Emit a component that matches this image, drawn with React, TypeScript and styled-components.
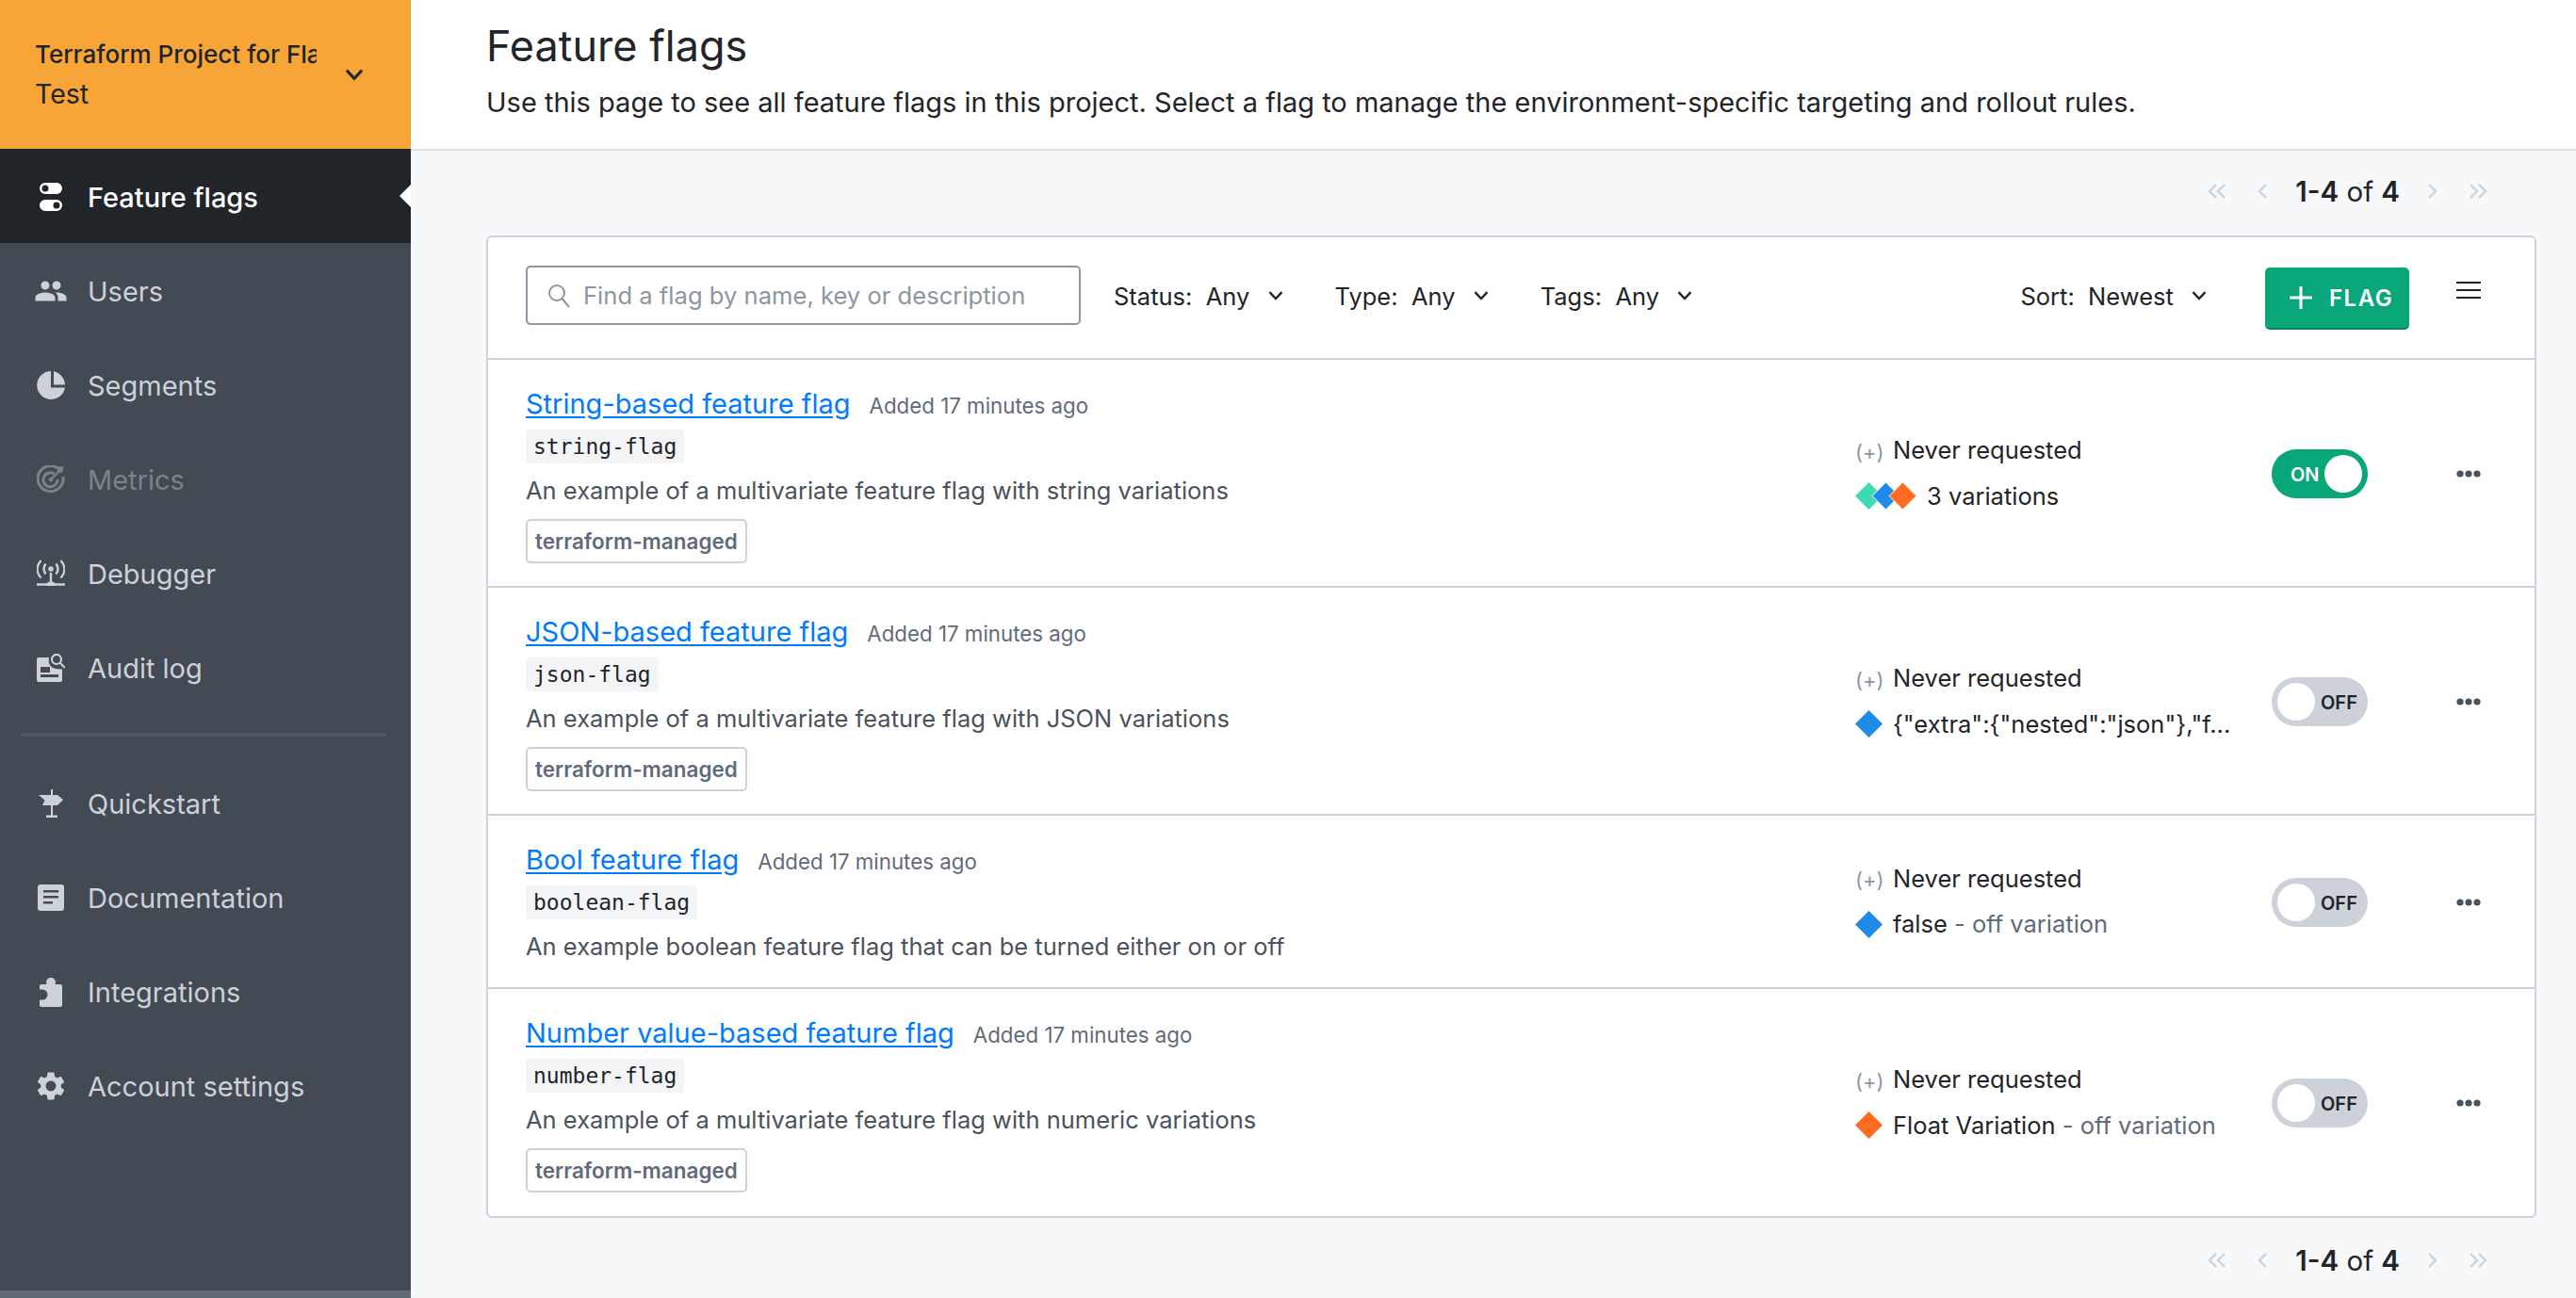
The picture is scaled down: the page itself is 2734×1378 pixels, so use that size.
import React from "react";
import styled, { createGlobalStyle } from "styled-components";
import { MdPeople, MdSettings } from "react-icons/md";

const GlobalStyle = createGlobalStyle`
  html, body {
    margin: 0;
    padding: 0;
    background: #f7f8fa;
    font-family: Inter, "Noto Sans", sans-serif;
    color: #212429;
  }
  * { box-sizing: border-box; }
`;

const Page = styled.div`
  display: flex;
  width: 2734px;
  height: 1378px;
  overflow: hidden;
`;

const Sidebar = styled.aside`
  width: 436px;
  flex: none;
  display: flex;
  flex-direction: column;
  background: #434a54;
  border-bottom: 8px solid #5f6a76;
`;

const ProjectHeader = styled.div`
  height: 158px;
  flex: none;
  background: #f8a537;
  display: flex;
  align-items: center;
  padding: 0 50px 0 37px;
  justify-content: space-between;
  color: #212429;
`;

const ProjectText = styled.div`
  width: 299px;
  overflow: hidden;
  white-space: nowrap;
  padding-top: 1px;
`;

const ProjectName = styled.div`
  font-size: 26px;
  font-weight: 500;
  line-height: 40px;
`;

const EnvName = styled.div`
  font-size: 28.5px;
  line-height: 44px;
`;

const NavList = styled.nav`
  display: flex;
  flex-direction: column;
`;

const NavItem = styled.div<{ $active?: boolean; $muted?: boolean }>`
  position: relative;
  height: 100px;
  display: flex;
  align-items: center;
  gap: 19px;
  padding: 2px 0 0 34px;
  font-size: 29px;
  font-weight: ${(p) => (p.$active ? 500 : 400)};
  background: ${(p) => (p.$active ? "#212429" : "transparent")};
  color: ${(p) => (p.$active ? "#ffffff" : p.$muted ? "#7c8288" : "#cdd1da")};
  ${(p) =>
    p.$active &&
    `&::after {
      content: "";
      position: absolute;
      right: 0;
      top: 38px;
      border-top: 12px solid transparent;
      border-bottom: 12px solid transparent;
      border-right: 12px solid #ffffff;
    }`}
`;

const NavIcon = styled.span`
  width: 40px;
  height: 40px;
  flex: none;
  display: flex;
  align-items: center;
  justify-content: center;
`;

const NavDivider = styled.div`
  height: 4px;
  margin: 20px 26px 20px 22px;
  background: #4f5661;
`;

const Main = styled.main`
  flex: 1;
  display: flex;
  flex-direction: column;
  min-width: 0;
`;

const TopBar = styled.header`
  height: 160px;
  flex: none;
  background: #ffffff;
  border-bottom: 2px solid #dcdfe4;
  padding: 20px 0 0 80px;
`;

const Title = styled.h1`
  margin: 0;
  font-size: 45px;
  font-weight: 400;
  line-height: 58px;
`;

const Subtitle = styled.p`
  margin: 10px 0 0;
  font-size: 29px;
  line-height: 42px;
`;

const Pager = styled.div<{ $bottom?: boolean }>`
  flex: none;
  height: ${(p) => (p.$bottom ? "85px" : "90px")};
  display: flex;
  align-items: center;
  justify-content: flex-end;
  gap: 30px;
  padding-right: 94px;
  padding-top: ${(p) => (p.$bottom ? "5px" : "0")};
  padding-bottom: ${(p) => (p.$bottom ? "0" : "4px")};
  color: #cdd1d9;
`;

const PagerText = styled.span`
  font-size: 29.5px;
  color: #212429;
  font-weight: 400;
  b {
    font-weight: 600;
  }
`;

const Card = styled.section`
  margin: 0 42px 0 80px;
  background: #ffffff;
  border: 2px solid #cdd1d9;
  border-radius: 6px;
`;

const Toolbar = styled.div`
  height: 128px;
  display: flex;
  align-items: center;
  padding: 2px 57px 0 40px;
  font-size: 25.5px;
`;

const SearchBox = styled.div`
  width: 589px;
  height: 63px;
  flex: none;
  display: flex;
  align-items: center;
  gap: 14px;
  padding-left: 21px;
  border: 2px solid #8c96a3;
  border-radius: 5px;
  color: #8c96a3;
  font-size: 25.6px;
  margin: 0 35px 7px 0;
`;

const Filter = styled.div<{ $push?: boolean }>`
  display: flex;
  align-items: center;
  gap: 12px;
  margin: 0 55px 6px 0;
  white-space: pre;
  ${(p) => p.$push && "margin-left: auto; margin-right: 62px;"}
`;

const AddButton = styled.button`
  width: 153px;
  height: 66px;
  flex: none;
  display: flex;
  align-items: center;
  gap: 17px;
  padding: 0 0 0 25px;
  background: #09a67a;
  color: #ffffff;
  border: none;
  border-bottom: 2px solid #087f5e;
  border-radius: 5px;
  font-family: inherit;
  font-size: 24px;
  font-weight: 600;
  letter-spacing: 1.5px;
  margin-right: 50px;
`;

const Row = styled.article`
  display: flex;
  align-items: center;
  padding: 26px 57px 24px 40px;
  border-top: 2px solid #cdd1d9;
  &:nth-of-type(n + 3) {
    padding-bottom: 25px;
  }
`;

const RowMain = styled.div`
  flex: 1;
  min-width: 0;
  padding-top: 3px;
`;

const NameLine = styled.div`
  display: flex;
  align-items: baseline;
  gap: 20px;
  height: 38px;
`;

const FlagName = styled.a`
  font-size: 29px;
  color: #007aff;
  text-decoration: underline;
  text-underline-offset: 3px;
`;

const Added = styled.span`
  font-size: 22.3px;
  color: #5f6b7a;
`;

const KeyChip = styled.code`
  display: block;
  width: fit-content;
  height: 36px;
  margin-top: 7px;
  padding: 0 8px;
  background: #f3f4f6;
  border-radius: 4px;
  font-family: "DejaVu Sans Mono", monospace;
  font-size: 23px;
  line-height: 36px;
`;

const Description = styled.div`
  margin-top: 11px;
  font-size: 25.5px;
  line-height: 36px;
  color: #4a525d;
`;

const Tag = styled.div`
  width: fit-content;
  height: 47px;
  margin-top: 12px;
  padding: 0 8px;
  border: 2px solid #cdd1d9;
  border-radius: 5px;
  font-size: 22.5px;
  font-weight: 600;
  line-height: 44px;
  color: #5f6b7a;
`;

const StatusCol = styled.div`
  width: 442px;
  flex: none;
  display: flex;
  flex-direction: column;
  gap: 11px;
  margin-bottom: 3px;
  font-size: 25.5px;
  line-height: 36px;
`;

const StatusLine = styled.div`
  display: flex;
  align-items: center;
  gap: 11px;
  white-space: nowrap;
`;

const PlusMark = styled.span`
  width: 29px;
  flex: none;
  font-size: 22px;
  color: #8c96a3;
  white-space: pre;
  padding-top: 3px;
`;

const OffNote = styled.span`
  color: #5f6b7a;
`;

const Toggle = styled.div<{ $on?: boolean }>`
  position: relative;
  width: 102px;
  height: 52px;
  flex: none;
  border-radius: 26px;
  background: ${(p) => (p.$on ? "#09a67a" : "#cdd1d9")};
  color: ${(p) => (p.$on ? "#ffffff" : "#212429")};
  font-size: 20px;
  font-weight: 600;
  line-height: 52px;
  padding: ${(p) => (p.$on ? "1px 0 0 20px" : "1px 0 0 52px")};
  &::after {
    content: "";
    position: absolute;
    top: 6px;
    width: 40px;
    height: 40px;
    border-radius: 50%;
    background: #ffffff;
    ${(p) => (p.$on ? "right: 6px;" : "left: 6px;")}
  }
`;

const MoreSlot = styled.div`
  width: 26px;
  margin-left: 94px;
  flex: none;
  display: flex;
  color: #4a525d;
`;

const MenuGlyph = styled.svg`
  flex: none;
  margin-bottom: 18px;
`;

const DoubleArrow = styled.svg<{ $side: "left" | "right" }>`
  flex: none;
  margin-${(p) => (p.$side === "left" ? "right" : "left")}: 3px;
`;

const MenuIcon = () => (
  <MenuGlyph width="26" height="20" viewBox="0 0 26 20">
    <path d="M0 2h26M0 10h26M0 18h26" stroke="#212429" strokeWidth="2" />
  </MenuGlyph>
);

const Chevron = ({ size = 16 }: { size?: number }) => (
  <svg width={size} height={size * 0.7} viewBox="0 0 16 11" fill="none">
    <path d="M1.5 2 8 9l6.5-7" stroke="currentColor" strokeWidth="2.4" />
  </svg>
);

const SearchIcon = () => (
  <svg width="24" height="26" viewBox="0 0 24 26" fill="none" stroke="currentColor" strokeWidth="2">
    <circle cx="10" cy="10" r="8" />
    <path d="M15.5 16 23 25" />
  </svg>
);

const PlusIcon = () => (
  <svg width="26" height="26" viewBox="0 0 26 26" style={{ flex: "none" }}>
    <path d="M13 1v24M1 13h24" stroke="#fff" strokeWidth="3" />
  </svg>
);

const Dots = () => (
  <svg width="26" height="8" viewBox="0 0 26 8" fill="currentColor">
    <circle cx="4" cy="4" r="3.6" />
    <circle cx="13" cy="4" r="3.6" />
    <circle cx="22" cy="4" r="3.6" />
  </svg>
);

const FlagsIcon = () => (
  <svg width="24" height="30" viewBox="0 0 24 30" fill="currentColor" fillRule="evenodd">
    <path d="M6 0h12a6 6 0 0 1 0 12H6A6 6 0 0 1 6 0Zm0 2.500a3.500 3.500 0 1 0 0 7 3.500 3.500 0 0 0 0-7Z" />
    <path d="M6 18h12a6 6 0 0 1 0 12H6a6 6 0 0 1 0-12Zm12 2.500a3.500 3.500 0 1 0 0 7 3.500 3.500 0 0 0 0-7Z" />
  </svg>
);

const PieIcon = () => (
  <svg width="30" height="30" viewBox="0 0 30 30" fill="currentColor">
    <path d="M15 0a15 15 0 0 1 15 15H17.500V0Z" />
    <path d="M15 0v17.500h15A15 15 0 1 1 15 0Z" />
    <path d="M17 0h1v14.500h12v1.500H16.500V0Z" fill="#434a54" />
  </svg>
);

const TargetIcon = () => (
  <svg width="30" height="30" viewBox="0 0 30 30" fill="none" stroke="currentColor" strokeWidth="3">
    <path d="M23 3.500A13.500 13.500 0 1 0 28 12" />
    <path d="M18.500 9A7.500 7.500 0 1 0 22 15" />
    <circle cx="15" cy="15" r="2" fill="currentColor" strokeWidth="1" />
    <path d="M15 15 23 7" strokeWidth="2.400" />
    <path d="M22 7.500 23 2l5-0.500-1 5.500Z" fill="currentColor" strokeWidth="1" />
  </svg>
);

const TowerIcon = () => (
  <svg width="30" height="30" viewBox="0 0 30 30" fill="none" stroke="currentColor" strokeWidth="2.400">
    <circle cx="15" cy="10" r="2.800" fill="currentColor" stroke="none" />
    <path d="M9.500 4.500c-2.500 3.500-2.500 7.500 0 11M20.500 4.500c2.500 3.500 2.500 7.500 0 11" />
    <path d="M4.500 1c-5 6-5 13 0 18.500M25.500 1c5 6 5 13 0 18.500" />
    <path d="M15 14v11M0 26.500h30" />
    <path d="M10.500 26.500a4.500 3 0 0 1 9 0v1.500h-9Z" fill="currentColor" stroke="none" />
  </svg>
);

const AuditIcon = () => (
  <svg width="30" height="30" viewBox="0 0 30 30" fill="currentColor">
    <path
      fillRule="evenodd"
      d="M2 4h11c-1 4 0 8 3 10.500l4 1.500 7 .5V28a2 2 0 0 1-2 2H2a2 2 0 0 1-2-2V6a2 2 0 0 1 2-2ZM4 14v6h10v-6ZM4 22v3h19v-3Z"
    />
    <circle cx="21" cy="6" r="5" fill="none" stroke="currentColor" strokeWidth="2.200" />
    <path d="m24.500 9.500 5.500 5.500" stroke="currentColor" strokeWidth="2.200" />
  </svg>
);

const SignIcon = () => (
  <svg width="26" height="30" viewBox="0 0 26 30" fill="currentColor">
    <path d="M13 0h2v6h-2ZM13 17h2v11h-2ZM8 27.500h12V30H8Z" />
    <path d="M0 6h20l6 5-6 6H4l2.500-5.500Z" />
  </svg>
);

const DocIcon = () => (
  <svg width="28" height="28" viewBox="0 0 28 28" fill="currentColor" fillRule="evenodd">
    <path d="M3 0h22a3 3 0 0 1 3 3v22a3 3 0 0 1-3 3H3a3 3 0 0 1-3-3V3a3 3 0 0 1 3-3Zm3 6v2.500h16V6Zm0 6v2.500h16V12Zm0 6v2.500h10V18Z" />
  </svg>
);

const PuzzleIcon = () => (
  <svg width="24" height="31" viewBox="0 0 24 31" fill="currentColor">
    <path d="M2 7h5.500A5 5 0 1 1 16.500 7H22a2 2 0 0 1 2 2v20a2 2 0 0 1-2 2H2a2 2 0 0 1-2-2v-5.500h3a5.500 5.500 0 0 0 0-11H0V9a2 2 0 0 1 2-2Z" />
  </svg>
);

const Diamonds = ({ colors }: { colors: string[] }) => (
  <svg
    width={29 + (colors.length - 1) * 18}
    height="29"
    viewBox={`0 0 ${29 + (colors.length - 1) * 18} 29`}
    style={{ flex: "none" }}
  >
    {colors.map((c, i) => (
      <path
        key={c}
        d={`M${14.5 + i * 18} 0 L${29 + i * 18} 14.5 L${14.5 + i * 18} 29 L${i * 18} 14.5Z`}
        fill={c}
        stroke={i > 0 ? "#fff" : "none"}
        strokeWidth="1"
      />
    ))}
  </svg>
);

const navTop = [
  { label: "Feature flags", icon: <FlagsIcon />, active: true },
  { label: "Users", icon: <MdPeople size={36} /> },
  { label: "Segments", icon: <PieIcon /> },
  { label: "Metrics", icon: <TargetIcon />, muted: true },
  { label: "Debugger", icon: <TowerIcon /> },
  { label: "Audit log", icon: <AuditIcon /> },
];

const navBottom = [
  { label: "Quickstart", icon: <SignIcon /> },
  { label: "Documentation", icon: <DocIcon /> },
  { label: "Integrations", icon: <PuzzleIcon /> },
  { label: "Account settings", icon: <MdSettings size={36} /> },
];

const TEAL = "#3ddbb0";
const BLUE = "#1f8ae8";
const ORANGE = "#ff6b21";

const flags = [
  {
    name: "String-based feature flag",
    flagKey: "string-flag",
    description: "An example of a multivariate feature flag with string variations",
    tag: true,
    on: true,
    colors: [TEAL, BLUE, ORANGE],
    variation: "3 variations",
  },
  {
    name: "JSON-based feature flag",
    flagKey: "json-flag",
    description: "An example of a multivariate feature flag with JSON variations",
    tag: true,
    colors: [BLUE],
    variation: '{"extra":{"nested":"json"},"f...',
  },
  {
    name: "Bool feature flag",
    flagKey: "boolean-flag",
    description: "An example boolean feature flag that can be turned either on or off",
    colors: [BLUE],
    variation: "false",
    offNote: true,
  },
  {
    name: "Number value-based feature flag",
    flagKey: "number-flag",
    description: "An example of a multivariate feature flag with numeric variations",
    tag: true,
    colors: [ORANGE],
    variation: "Float Variation",
    offNote: true,
  },
];

const Pagination = ({ bottom }: { bottom?: boolean }) => (
  <Pager $bottom={bottom}>
    <DoubleArrow $side="left" width="20" height="16" viewBox="0 0 20 16" fill="none" stroke="currentColor" strokeWidth="2.400">
      <path d="M9 1 2 8l7 7M18 1l-7 7 7 7" />
    </DoubleArrow>
    <svg width="10" height="16" viewBox="0 0 10 16" fill="none" stroke="currentColor" strokeWidth="2.400">
      <path d="M9 1 2 8l7 7" />
    </svg>
    <PagerText>
      <b>1-4</b> of <b>4</b>
    </PagerText>
    <svg width="10" height="16" viewBox="0 0 10 16" fill="none" stroke="currentColor" strokeWidth="2.400">
      <path d="m1 1 7 7-7 7" />
    </svg>
    <DoubleArrow $side="right" width="20" height="16" viewBox="0 0 20 16" fill="none" stroke="currentColor" strokeWidth="2.400">
      <path d="m2 1 7 7-7 7M11 1l7 7-7 7" />
    </DoubleArrow>
  </Pager>
);

export default function App() {
  return (
    <Page>
      <GlobalStyle />
      <Sidebar>
        <ProjectHeader>
          <ProjectText>
            <ProjectName>Terraform Project for Flags</ProjectName>
            <EnvName>Test</EnvName>
          </ProjectText>
          <Chevron size={20} />
        </ProjectHeader>
        <NavList>
          {navTop.map((item) => (
            <NavItem key={item.label} $active={item.active} $muted={item.muted}>
              <NavIcon>{item.icon}</NavIcon>
              {item.label}
            </NavItem>
          ))}
          <NavDivider />
          {navBottom.map((item) => (
            <NavItem key={item.label}>
              <NavIcon>{item.icon}</NavIcon>
              {item.label}
            </NavItem>
          ))}
        </NavList>
      </Sidebar>
      <Main>
        <TopBar>
          <Title>Feature flags</Title>
          <Subtitle>
            Use this page to see all feature flags in this project. Select a flag to manage the
            environment-specific targeting and rollout rules.
          </Subtitle>
        </TopBar>
        <Pagination />
        <Card>
          <Toolbar>
            <SearchBox>
              <SearchIcon />
              Find a flag by name, key or description
            </SearchBox>
            <Filter>
              Status:  Any <Chevron />
            </Filter>
            <Filter>
              Type:  Any <Chevron />
            </Filter>
            <Filter>
              Tags:  Any <Chevron />
            </Filter>
            <Filter $push>
              Sort:  Newest <Chevron />
            </Filter>
            <AddButton>
              <PlusIcon />
              FLAG
            </AddButton>
            <MenuIcon />
          </Toolbar>
          {flags.map((flag) => (
            <Row key={flag.flagKey}>
              <RowMain>
                <NameLine>
                  <FlagName>{flag.name}</FlagName>
                  <Added>Added 17 minutes ago</Added>
                </NameLine>
                <KeyChip>{flag.flagKey}</KeyChip>
                <Description>{flag.description}</Description>
                {flag.tag && <Tag>terraform-managed</Tag>}
              </RowMain>
              <StatusCol>
                <StatusLine>
                  <PlusMark>(+)</PlusMark>
                  Never requested
                </StatusLine>
                <StatusLine>
                  <Diamonds colors={flag.colors} />
                  <span>
                    {flag.variation}
                    {flag.offNote && <OffNote> - off variation</OffNote>}
                  </span>
                </StatusLine>
              </StatusCol>
              <Toggle $on={flag.on}>{flag.on ? "ON" : "OFF"}</Toggle>
              <MoreSlot>
                <Dots />
              </MoreSlot>
            </Row>
          ))}
        </Card>
        <Pagination bottom />
      </Main>
    </Page>
  );
}
